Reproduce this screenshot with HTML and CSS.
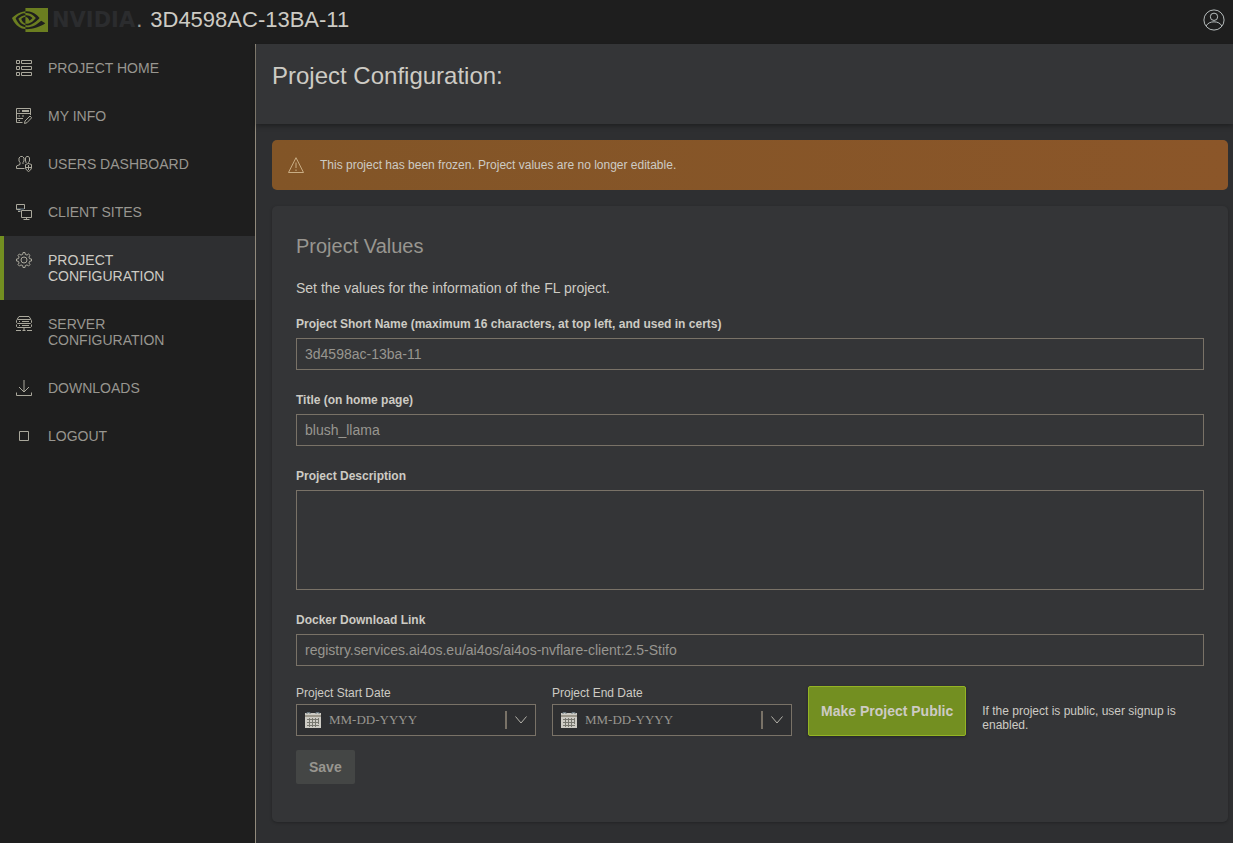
FILE: index.html
```html
<!DOCTYPE html>
<html lang="en">
<head>
<meta charset="utf-8">
<meta name="viewport" content="width=device-width, initial-scale=1">
<title>Project Configuration</title>
<link rel="stylesheet" href="styles.css">
</head>
<body>
<div class="app">
  <header class="topbar">
    <div class="brand">
      <svg class="brand-eye" viewBox="0 4 24 16" aria-hidden="true">
        <path d="M8.948 8.798v-1.430a6.700 6.700 0 0 1 .424-.018c3.922-.124 6.493 3.374 6.493 3.374s-2.774 3.851-5.750 3.851c-.398 0-.787-.062-1.158-.185v-4.346c1.528.185 1.837.857 2.747 2.385l2.040-1.714s-1.492-1.952-4-1.952a6.016 6.016 0 0 0-.796.035m0-4.735v2.138l.424-.027c5.450-.185 9.010 4.470 9.010 4.470s-4.080 4.964-8.330 4.964c-.370 0-.733-.035-1.095-.097v1.325c.300.035.610.062.910.062 3.957 0 6.820-2.023 9.593-4.408.459.371 2.340 1.263 2.730 1.652-2.633 2.208-8.772 3.984-12.253 3.984-.335 0-.653-.018-.971-.053v1.864H24V4.063zm0 10.326v1.131c-3.657-.654-4.673-4.460-4.673-4.460s1.758-1.944 4.673-2.262v1.237H8.940c-1.528-.186-2.730 1.245-2.730 1.245s.680 2.412 2.739 3.110M2.456 10.900s2.164-3.197 6.500-3.533V6.201C4.153 6.590 0 10.653 0 10.653s2.350 6.802 8.948 7.420v-1.237c-4.840-.600-6.492-5.936-6.492-5.936z"/>
      </svg>
      <span class="brand-name">NVIDIA</span><span class="brand-dot">.</span>
    </div>
    <div class="project-name">3D4598AC-13BA-11</div>
    <button class="user-button" type="button" aria-label="User account">
      <svg viewBox="0 0 24 24" aria-hidden="true"><circle cx="12" cy="12" r="11"/><circle cx="12" cy="8.500" r="4"/><path d="M3.500 18.500C5 15.500 8 14 12 14S19 15.500 20.500 18.500"/></svg>
    </button>
  </header>

  <nav class="sidebar" aria-label="Main">
    <a class="nav-item" href="#home">
      <svg viewBox="0 0 16 16" aria-hidden="true"><path d="M.5.500h3v3h-3zM5.500.500h10v3h-10zM.5 6.500h3v3h-3zM5.500 6.500h10v3h-10zM.5 12.500h3v3h-3zM5.500 12.500h10v3h-10z"/></svg>
      <span>PROJECT HOME</span></a>
    <a class="nav-item" href="#info">
      <svg viewBox="0 0 16 16" aria-hidden="true"><path d="M14.500 7V.500H.500V14.500H6.500M.5 5.500H14.500M.5 10.500H7M2.500 3H4M6 2.500H13M6 3.500H13M2.500 8H4M6 8H8M2.500 12.500H4"/><path d="M8.500 15.500L9 13L14 8L15.700 9.700L11 14.700Z"/></svg>
      <span>MY INFO</span></a>
    <a class="nav-item" href="#users">
      <svg viewBox="0 0 16 16" aria-hidden="true"><path d="M8.500 12.500H.500V10L4 8.500V6.500L3 5V2L4.500.500H6.500L8 2V5L7 6.500V8M10 7V6L9.500 5V2L10.500.500H12.500L13.500 2V5L12.500 6.500V7.500M9.500 8.500L12.500 7.500L15.500 8.500V12L14.500 14L12.500 15.500L10.500 14L9.500 12ZM12.500 9V14M10 11.500H15"/></svg>
      <span>USERS DASHBOARD</span></a>
    <a class="nav-item" href="#sites">
      <svg viewBox="0 0 16 16" aria-hidden="true"><path class="shade" d="M1 4H8V6H5V7H2Z"/><path d="M4.500 5.500H.500V.500H8.500V5M2 7.500H4.500M5.500 6.500H15.500V13.500H5.500ZM10.500 13.500V15.500M7.500 15.500H13.500"/></svg>
      <span>CLIENT SITES</span></a>
    <a class="nav-item active" href="#project" aria-current="page">
      <svg viewBox="0 0 16 16" aria-hidden="true"><circle cx="8" cy="8" r="3"/><path d="M6.700 2.400L7 .500H9L9.300 2.400L11 3.100L12.600 2L14 3.400L12.900 5L13.600 6.700L15.500 7V9L13.600 9.300L12.900 11L14 12.600L12.600 14L11 12.900L9.300 13.600L9 15.500H7L6.700 13.600L5 12.900L3.400 14L2 12.600L3.100 11L2.400 9.300L.5 9V7L2.400 6.700L3.100 5L2 3.400L3.400 2L5 3.100Z"/></svg>
      <span>PROJECT CONFIGURATION</span></a>
    <a class="nav-item" href="#server">
      <svg viewBox="0 0 16 16" aria-hidden="true"><path d="M1 3.500L3 .500H13L15 3.500M1.500 3.500H14.500L15.500 4.500V6.500L14.500 7.500H1.500L.5 6.500V4.500ZM.5 8.500V10.500L1.500 11.500H14.500L15.500 10.500V8.500M3 5.500H4M6 5.500H13M3 9.500H4M6 9.500H13M8 11.500V14M0 14.500H5M6.500 14.500H9.500M11 14.500H16"/></svg>
      <span>SERVER CONFIGURATION</span></a>
    <a class="nav-item" href="#downloads">
      <svg viewBox="0 0 16 16" aria-hidden="true"><path d="M8 0V12M3 7L8 12L13 7M.5 12.500V15.500H15.500V12.500"/></svg>
      <span>DOWNLOADS</span></a>
    <a class="nav-item" href="#logout">
      <svg viewBox="0 0 16 16" aria-hidden="true"><path d="M3.500 3.500H12.500V12.500H3.500Z"/></svg>
      <span>LOGOUT</span></a>
  </nav>

  <main class="content">
    <div class="page-head"><h1>Project Configuration:</h1></div>
    <div class="page-body">
      <div class="alert" role="status">
        <svg viewBox="0 0 16 16" aria-hidden="true"><path d="M8 .700L15.500 15.500H.500ZM8 5.500V11M8 12.500V14"/></svg>
        <span>This project has been frozen. Project values are no longer editable.</span>
      </div>
      <form class="card">
        <h2>Project Values</h2>
        <p class="intro">Set the values for the information of the FL project.</p>
        <div class="field">
          <label for="short-name">Project Short Name (maximum 16 characters, at top left, and used in certs)</label>
          <input id="short-name" class="control" type="text" value="3d4598ac-13ba-11" readonly>
        </div>
        <div class="field">
          <label for="title">Title (on home page)</label>
          <input id="title" class="control" type="text" value="blush_llama" readonly spellcheck="false">
        </div>
        <div class="field">
          <label for="description">Project Description</label>
          <textarea id="description" class="control area" readonly></textarea>
        </div>
        <div class="field">
          <label for="docker">Docker Download Link</label>
          <input id="docker" class="control" type="text" value="registry.services.ai4os.eu/ai4os/ai4os-nvflare-client:2.5-Stifo" readonly>
        </div>
        <div class="date-row">
          <div class="date-field">
            <label for="start">Project Start Date</label>
            <div class="date-box">
              <svg class="calendar" viewBox="0 0 16 16" aria-hidden="true"><path class="cal-page" d="M0 1H16V16H0Z"/><path class="cal-head" d="M0 3H16V5H0Z"/><path class="cal-ring" d="M2 2V.500H5V2M11 2V.500H14V2"/><path class="cal-grid" d="M2 7.500H14M2 10.500H14M2 13.500H14M4.500 6V15M7.500 6V15M10.500 6V15M13.500 6V12"/></svg>
              <input id="start" type="text" placeholder="MM-DD-YYYY" readonly>
              <button class="date-toggle" type="button" aria-label="Open start date calendar"><svg viewBox="0 0 12 8" aria-hidden="true"><path d="M.5.500L6 7L11.500.500"/></svg></button>
            </div>
          </div>
          <div class="date-field">
            <label for="end">Project End Date</label>
            <div class="date-box">
              <svg class="calendar" viewBox="0 0 16 16" aria-hidden="true"><path class="cal-page" d="M0 1H16V16H0Z"/><path class="cal-head" d="M0 3H16V5H0Z"/><path class="cal-ring" d="M2 2V.500H5V2M11 2V.500H14V2"/><path class="cal-grid" d="M2 7.500H14M2 10.500H14M2 13.500H14M4.500 6V15M7.500 6V15M10.500 6V15M13.500 6V12"/></svg>
              <input id="end" type="text" placeholder="MM-DD-YYYY" readonly>
              <button class="date-toggle" type="button" aria-label="Open end date calendar"><svg viewBox="0 0 12 8" aria-hidden="true"><path d="M.5.500L6 7L11.500.500"/></svg></button>
            </div>
          </div>
          <button class="public-button" type="button">Make Project Public</button>
          <p class="public-note">If the project is public, user signup is enabled.</p>
        </div>
        <button class="save-button" type="submit" disabled>Save</button>
      </form>
    </div>
  </main>
</div>
</body>
</html>
```
FILE: styles.css
```css
* { box-sizing: border-box; }
body {
  margin: 0;
  background: #2e2f31;
  color: #cdcbc4;
  font-family: "Liberation Sans", Arial, sans-serif;
  font-size: 14px;
}
h1, h2, p { margin: 0; font-weight: 400; }
button, input, textarea { font: inherit; color: inherit; margin: 0; }
svg { display: block; flex: none; fill: none; stroke: currentColor; }

.app {
  display: grid;
  grid-template-columns: 256px minmax(0, 1fr);
  grid-template-rows: 44px 1fr;
  min-height: 100vh;
}

.topbar {
  grid-column: 1 / -1;
  display: flex;
  align-items: center;
  padding: 0 8px 4px 12px;
  background: #1e1e1e;
}
.brand { display: flex; align-items: baseline; }
.brand-eye { align-self: center; width: 36px; height: 24px; fill: #6b7e20; stroke: none; }
.brand-name {
  margin-left: 4px;
  color: #2b2c2e;
  font: bold 21px/24px "DejaVu Sans", sans-serif;
}
.brand-dot { margin-left: 1px; color: #a09e97; font-size: 22px; line-height: 24px; }
.project-name { margin-left: 8px; font-size: 22px; line-height: 24px; }
.user-button { margin-left: auto; padding: 0; border: 0; background: none; color: #c4cbcb; }
.user-button svg { width: 22px; height: 22px; }

.sidebar {
  background: #1e1e1e;
  border-right: 1px solid #918a7c;
}
.nav-item {
  display: flex;
  gap: 16px;
  padding: 16px 64px 16px 12px;
  border-left: 4px solid transparent;
  color: #989690;
  line-height: 16px;
  text-decoration: none;
}
.nav-item svg { width: 16px; height: 16px; color: #aaa89c; }
.nav-item .shade { fill: #465058; stroke: none; }
.nav-item.active { background: #2e2f31; border-left-color: #738f21; color: #cdcbc4; }

.page-head {
  position: relative;
  height: 80px;
  padding: 16px;
  background: #343537;
  box-shadow: 0 2px 5px rgb(0 0 0 / 35%);
}
h1 { font-size: 24px; line-height: 32px; }
.page-body {
  display: flex;
  flex-direction: column;
  gap: 16px;
  padding: 16px 5px 21px 16px;
}
.alert {
  display: flex;
  align-items: center;
  gap: 16px;
  min-height: 50px;
  padding: 8px 16px;
  border-radius: 5px;
  background: linear-gradient(90deg, #825527, #8b5629);
  font-size: 12px;
}
.alert svg { width: 16px; height: 16px; color: #c9ad84; }

.card {
  padding: 24px 24px 38px;
  border-radius: 5px;
  background: #343537;
  box-shadow: 0 1px 3px rgb(0 0 0 / 25%);
}
h2 { margin-bottom: 18px; color: #989690; font-size: 20px; line-height: 32px; }
.intro { margin-bottom: 20px; line-height: 16px; }
.field { display: flex; flex-direction: column; gap: 6px; margin-bottom: 22px; }
.field label { font-size: 12px; font-weight: 700; line-height: 16px; }
.control {
  display: block;
  width: 100%;
  height: 32px;
  padding: 0 8px;
  border: 1px solid #797267;
  border-radius: 0;
  outline: 0;
  background: transparent;
  color: #989690;
}
.area { height: 100px; resize: none; }

.date-row { display: flex; align-items: flex-end; gap: 16px; margin: -2px 0 14px; }
.date-field { display: flex; flex: 0 1 240px; flex-direction: column; gap: 4px; min-width: 0; }
.date-field label { font-size: 12px; line-height: 14px; }
.date-box {
  display: flex;
  align-items: center;
  height: 32px;
  padding: 0 8px;
  border: 1px solid #797267;
  background: #2e2f31;
}
.calendar { width: 16px; height: 16px; }
.cal-page { fill: #cdcbc4; stroke: none; }
.cal-head { fill: #9b978b; stroke: none; }
.cal-ring { stroke: #68777f; }
.cal-grid { stroke: #77776f; }
.date-box input {
  flex: 1;
  width: 0;
  padding: 0 8px;
  border: 0;
  outline: 0;
  background: none;
  font-family: "Liberation Serif", "Times New Roman", serif;
  font-size: 13px;
}
.date-box input::placeholder { color: #989690; opacity: 1; }
.date-toggle {
  display: flex;
  align-items: center;
  height: 18px;
  padding: 0 0 0 8px;
  border: 0;
  border-left: 2px solid #797267;
  background: none;
  color: #b5b3ab;
}
.date-toggle svg { width: 12px; height: 8px; }
.public-button {
  flex: none;
  height: 50px;
  padding: 0 12px;
  border: 1px solid #94b424;
  border-radius: 2px;
  background: #738f21;
  box-shadow: 0 1px 3px rgb(0 0 0 / 30%);
  font-weight: 700;
}
.public-note { flex: 1; padding-bottom: 4px; font-size: 12px; line-height: 14px; }
.save-button {
  display: block;
  height: 34px;
  padding: 0 13px;
  border: 0;
  border-radius: 2px;
  background: #444645;
  color: #989690;
  font-weight: 700;
}
```
